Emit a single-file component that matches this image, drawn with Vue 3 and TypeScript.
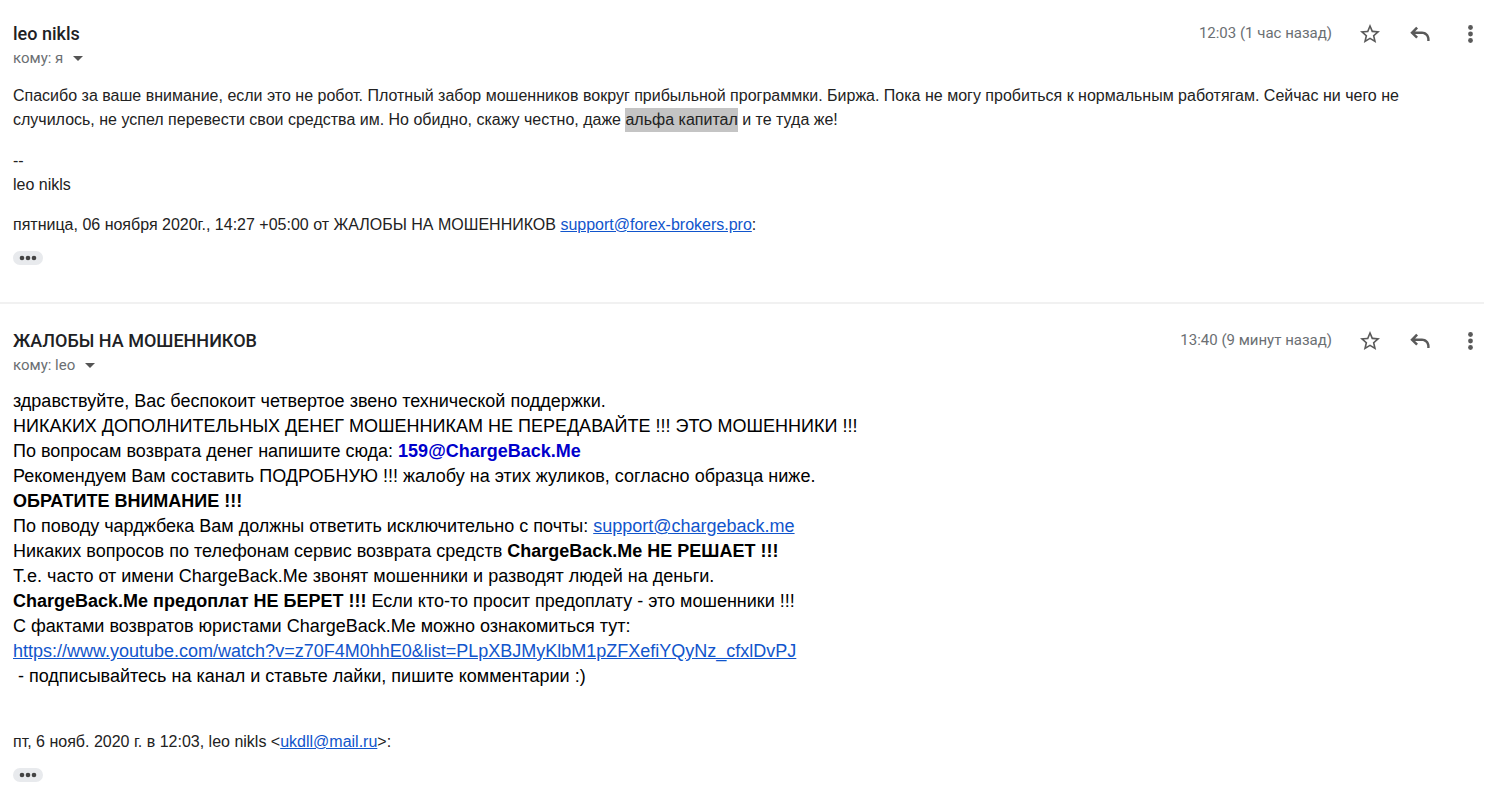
<script setup lang="ts">
import { ref } from 'vue'

interface Part {
  text: string
  kind?: 'link' | 'strong' | 'address' | 'mark'
  href?: string
}

interface Message {
  id: string
  sender: string
  recipient: string
  time: string
  large: boolean
  lines: Part[][]
  signature: string[]
  quote: Part[]
}

const messages: Message[] = [
  {
    id: 'first',
    sender: 'leo nikls',
    recipient: 'я',
    time: '12:03 (1 час назад)',
    large: false,
    lines: [
      [
        {
          text: 'Спасибо за ваше внимание, если это не робот. Плотный забор мошенников вокруг прибыльной программки. Биржа. Пока не могу пробиться к нормальным работягам. Сейчас ни чего не случилось, не успел перевести свои средства им. Но обидно, скажу честно, даже ',
        },
        { text: 'альфа капитал', kind: 'mark' },
        { text: ' и те туда же!' },
      ],
    ],
    signature: ['--', 'leo nikls'],
    quote: [
      { text: 'пятница, 06 ноября 2020г., 14:27 +05:00 от ЖАЛОБЫ НА МОШЕННИКОВ ' },
      { text: 'support@forex-brokers.pro', kind: 'link', href: 'mailto:support@forex-brokers.pro' },
      { text: ':' },
    ],
  },
  {
    id: 'second',
    sender: 'ЖАЛОБЫ НА МОШЕННИКОВ',
    recipient: 'leo',
    time: '13:40 (9 минут назад)',
    large: true,
    lines: [
      [{ text: 'здравствуйте, Вас беспокоит четвертое звено технической поддержки.' }],
      [{ text: 'НИКАКИХ ДОПОЛНИТЕЛЬНЫХ ДЕНЕГ МОШЕННИКАМ НЕ ПЕРЕДАВАЙТЕ !!! ЭТО МОШЕННИКИ !!!' }],
      [{ text: 'По вопросам возврата денег напишите сюда: ' }, { text: '159@ChargeBack.Me', kind: 'address' }],
      [{ text: 'Рекомендуем Вам составить ПОДРОБНУЮ !!! жалобу на этих жуликов, согласно образца ниже.' }],
      [{ text: 'ОБРАТИТЕ ВНИМАНИЕ !!!', kind: 'strong' }],
      [
        { text: 'По поводу чарджбека Вам должны ответить исключительно с почты: ' },
        { text: 'support@chargeback.me', kind: 'link', href: 'mailto:support@chargeback.me' },
      ],
      [
        { text: 'Никаких вопросов по телефонам сервис возврата средств ' },
        { text: 'ChargeBack.Me НЕ РЕШАЕТ !!!', kind: 'strong' },
      ],
      [{ text: 'Т.е. часто от имени ChargeBack.Me звонят мошенники и разводят людей на деньги.' }],
      [
        { text: 'ChargeBack.Me предоплат НЕ БЕРЕТ !!!', kind: 'strong' },
        { text: ' Если кто-то просит предоплату - это мошенники !!!' },
      ],
      [{ text: 'С фактами возвратов юристами ChargeBack.Me можно ознакомиться тут:' }],
      [
        {
          text: 'https://www.youtube.com/watch?v=z70F4M0hhE0&list=PLpXBJMyKlbM1pZFXefiYQyNz_cfxlDvPJ',
          kind: 'link',
          href: 'https://www.youtube.com/watch?v=z70F4M0hhE0&list=PLpXBJMyKlbM1pZFXefiYQyNz_cfxlDvPJ',
        },
      ],
      [{ text: '\u00a0- подписывайтесь на канал и ставьте лайки, пишите комментарии :)' }],
    ],
    signature: [],
    quote: [
      { text: 'пт, 6 нояб. 2020 г. в 12:03, leo nikls <' },
      { text: 'ukdll@mail.ru', kind: 'link', href: 'mailto:ukdll@mail.ru' },
      { text: '>:' },
    ],
  },
]

const starred = ref<Record<string, boolean>>({})

function toggleStar(id: string) {
  starred.value[id] = !starred.value[id]
}
</script>

<template>
  <main class="thread">
    <article v-for="m in messages" :key="m.id" class="message">
      <header class="head">
        <div class="who">
          <h2 class="sender">{{ m.sender }}</h2>
          <button type="button" class="recipient">
            <span>кому: {{ m.recipient }}</span>
            <svg class="caret" viewBox="0 0 10 5" aria-hidden="true"><path d="M0 0h10L5 5z" /></svg>
          </button>
        </div>
        <div class="tools">
          <time class="time">{{ m.time }}</time>
          <button type="button" class="tool" aria-label="Пометить" :aria-pressed="!!starred[m.id]" @click="toggleStar(m.id)">
            <svg viewBox="0 0 24 24" aria-hidden="true">
              <path
                d="M22 9.24l-7.19-.62L12 2 9.19 8.63 2 9.24l5.46 4.73L5.82 21 12 17.27 18.18 21l-1.63-7.03L22 9.24zM12 15.4l-3.76 2.27 1-4.28-3.32-2.88 4.38-.38L12 6.1l1.71 4.04 4.38.38-3.32 2.88 1 4.28L12 15.4z"
              />
            </svg>
          </button>
          <button type="button" class="tool" aria-label="Ответить">
            <svg viewBox="0 0 24 24" aria-hidden="true">
              <path d="M8.200 4.800 10 6.600 7.100 9.500H14c4.200 0 7.600 3.400 7.600 7.600V19h-2.400v-1.900c0-2.900-2.300-5.200-5.200-5.200H7.100L10 14.800l-1.800 1.800-5.900-5.900z" />
            </svg>
          </button>
          <button type="button" class="tool" aria-label="Ещё">
            <svg viewBox="0 0 24 24" aria-hidden="true">
              <circle cx="12.500" cy="5.500" r="2.400" />
              <circle cx="12.500" cy="12" r="2.400" />
              <circle cx="12.500" cy="18.500" r="2.400" />
            </svg>
          </button>
        </div>
      </header>

      <div class="body" :class="{ large: m.large }">
        <p v-for="(line, i) in m.lines" :key="i" class="line">
          <template v-for="(p, j) in line" :key="j"
            ><a v-if="p.kind === 'link'" :href="p.href">{{ p.text }}</a
            ><strong v-else-if="p.kind === 'strong'">{{ p.text }}</strong
            ><strong v-else-if="p.kind === 'address'" class="address">{{ p.text }}</strong
            ><mark v-else-if="p.kind === 'mark'">{{ p.text }}</mark
            ><template v-else>{{ p.text }}</template></template
          >
        </p>
      </div>

      <div v-if="m.signature.length" class="signature">
        <p v-for="s in m.signature" :key="s" class="line">{{ s }}</p>
      </div>

      <p class="quote" :class="{ apart: m.large }">
        <template v-for="(p, j) in m.quote" :key="j"
          ><a v-if="p.kind === 'link'" :href="p.href">{{ p.text }}</a
          ><template v-else>{{ p.text }}</template></template
        >
      </p>
      <button type="button" class="more" aria-label="Показать скрытый текст">
        <svg viewBox="0 0 18 6" aria-hidden="true">
          <circle cx="3" cy="3" r="2.300" />
          <circle cx="9" cy="3" r="2.300" />
          <circle cx="15" cy="3" r="2.300" />
        </svg>
      </button>
    </article>
  </main>
</template>

<style>
body {
  margin: 0;
  background: #fff;
}
</style>

<style scoped>
.thread {
  padding-right: 16px;
  font-family: "Liberation Sans", Arial, sans-serif;
  font-size: 16px;
  line-height: 24px;
  color: #222;
}

.message {
  padding: 22px 0 37px 13px;
}

.message + .message {
  padding-top: 25px;
  padding-bottom: 12px;
  border-top: 2px solid #f1f1f1;
}

.head {
  display: flex;
  justify-content: space-between;
  align-items: flex-start;
  font-family: Roboto, Arial, sans-serif;
}

.sender {
  margin: 0;
  font-size: 18px;
  font-weight: 500;
  line-height: 24px;
  color: #202124;
}

button {
  margin: 0;
  padding: 0;
  border: 0;
  background: none;
  font: inherit;
  color: #5f6368;
  cursor: pointer;
}

.recipient {
  display: flex;
  align-items: center;
  gap: 10px;
  font-size: 15px;
  line-height: 24px;
  color: #6b6f73;
}

.caret {
  width: 10px;
  height: 5px;
  fill: #555;
}

.tools {
  display: flex;
  align-items: center;
}

.time {
  margin-right: 26px;
  font-size: 15px;
  line-height: 22px;
  align-self: flex-start;
  color: #6b6f73;
}

.tool {
  display: flex;
  width: 24px;
  height: 24px;
  margin-right: 26px;
  align-items: center;
  justify-content: center;
}

.tool:last-child {
  margin-right: 2px;
}

.tool svg {
  width: 24px;
  height: 24px;
  fill: #5a5a5a;
}

.body {
  margin-top: 14px;
}

.body.large {
  margin-top: 12px;
  font-size: 18px;
  line-height: 25px;
  color: #000;
}

.line,
.quote {
  margin: 0;
}

.signature {
  margin-top: 17px;
}

.quote {
  margin-top: 16px;
}

.quote.apart {
  margin-top: 41px;
}

a {
  color: #15c;
}

.address {
  color: #00c;
}

mark {
  display: inline-block;
  background: #c4c4c4;
  color: inherit;
}

.more {
  display: flex;
  width: 30px;
  height: 14px;
  margin-top: 14px;
  align-items: center;
  justify-content: center;
  border-radius: 7px;
  background: #e8eaed;
}

.more svg {
  width: 18px;
  height: 6px;
  fill: #444;
}
</style>
